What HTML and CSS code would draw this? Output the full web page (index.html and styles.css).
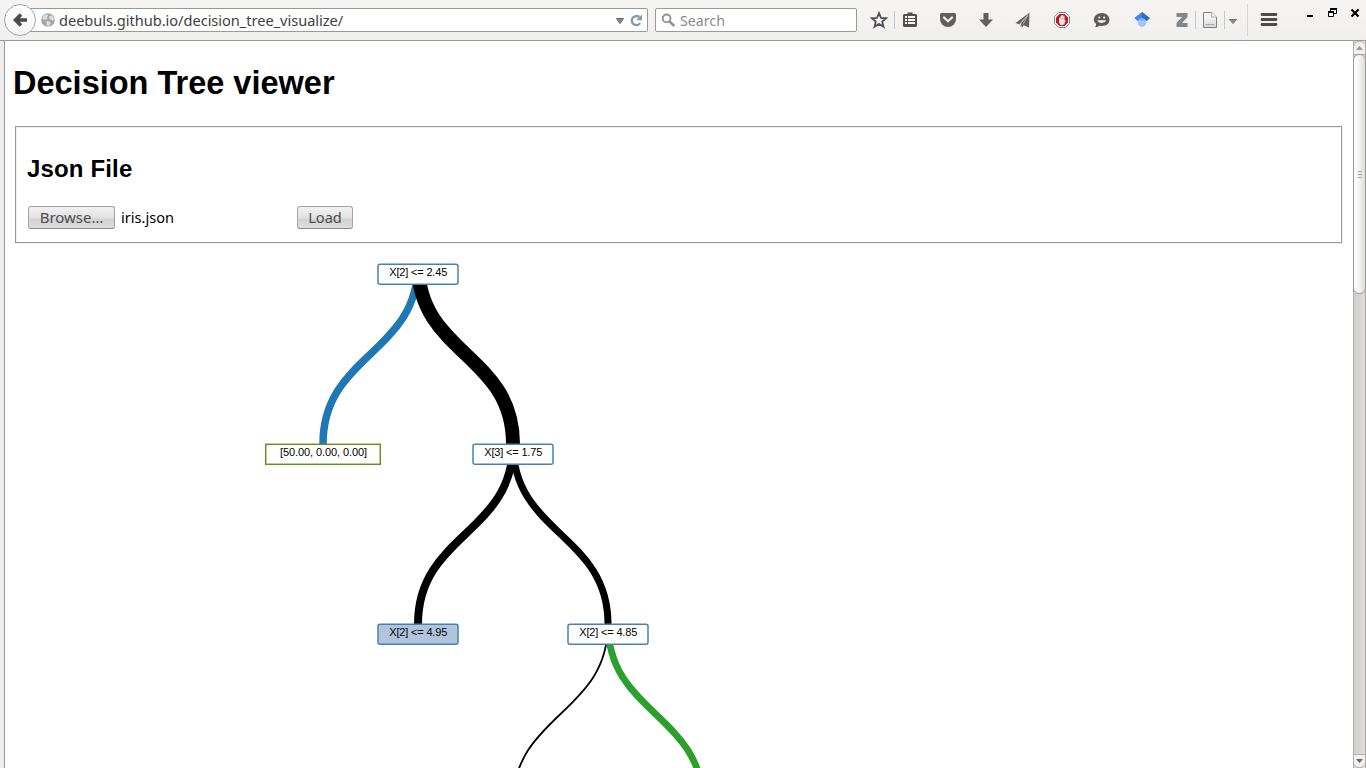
FILE: index.html
```html
<!DOCTYPE html>
<html lang="en">
<head>
<meta charset="utf-8">
<title>Decision Tree viewer</title>
<link rel="stylesheet" href="styles.css">
</head>
<body>
<header class="toolbar">
  <button class="back" aria-label="Back"><svg width="14" height="16" viewBox="0 0 14 16"><path d="M8 2.5 2.5 8 8 13.5M3 8H14" fill="none" stroke="#4a4a4a" stroke-width="3.6"/></svg></button>
  <div class="url">
    <svg class="globe" width="14" height="14" viewBox="0 0 14 14"><circle cx="7" cy="7" r="6.8" fill="#a5a5a5"/><path d="M2 3 5 1.2 7.2 2.2 6 4 6.5 5.5 4 7 1.5 6zM8.5 3 11 2.6 13 5.5 12 8 9.5 6.5 8 5zM5.5 8 9 8.5 9.5 11 7.5 13.3 5.5 12z" fill="#dedede"/></svg>
    <span class="url-text">deebuls.github.io/decision_tree_visualize/</span>
    <svg class="drop" width="8" height="6" viewBox="0 0 8 6"><path d="M.5.5H7.5L4 5.5z" fill="#888" stroke="#666"/></svg>
    <svg class="reload" width="13" height="13" viewBox="0 0 13 13"><path d="M10.200 9.200A4.600 4.600 0 1 1 9.300 3" fill="none" stroke="#8a99a8" stroke-width="2.300"/><path d="M12 .6V6.200H6.200z" fill="#8a99a8"/></svg>
  </div>
  <div class="search">
    <svg width="15" height="15" viewBox="0 0 15 15"><circle cx="5.600" cy="5.400" r="3.900" fill="none" stroke="#909090" stroke-width="1.900"/><path d="M8.500 8.300 13.300 13" stroke="#909090" stroke-width="2.500"/></svg>
    <span class="search-text">Search</span>
  </div>
  <div class="icons">
    <svg class="i star" width="20" height="20"><path d="M10 3.200 12 8 17.100 8.300 13.200 11.600 14.500 16.700 10 13.900 5.500 16.700 6.800 11.600 2.900 8.300 8 8z" fill="#fafafa" stroke="#505050" stroke-width="1.800"/></svg>
    <i class="sep blue"></i>
    <svg class="i list" width="20" height="20"><path d="M4.500 4H7.500V2.500H12.500V4H15.500Q17 4 17 5.500V15.500Q17 17 15.500 17H4.500Q3 17 3 15.500V5.500Q3 4 4.500 4z" fill="#505050"/><path d="M5 6H7V8H5zM8 6H15V8H8zM5 9H7V11H5zM8 9H15V11H8zM5 12H7V14H5zM8 12H15V14H8z" fill="#f5f5f5"/></svg>
    <svg class="i pocket" width="20" height="20"><path d="M3.500 3H16.500Q18 3 18 4.500V9A8 8 0 0 1 2 9V4.500Q2 3 3.500 3z" fill="#606060"/><path d="M6 7.500 10 11.300 14 7.500" fill="none" stroke="#f4f4f4" stroke-width="2.200" stroke-linecap="round" stroke-linejoin="round"/></svg>
    <svg class="i down" width="20" height="20"><path d="M7.500 3H12.500V9.500H17L10 17 3 9.500H7.500z" fill="#606060"/></svg>
    <svg class="i plane" width="20" height="20"><path d="M17.500 2.500 3.500 13 7.300 14.300z M17.500 2.500 8.800 14 10 17.500 11.800 15.200 17 17.500z" fill="#606060"/><path d="M17 3.500 8 14.300 9.500 17.500M15.500 6 11 14.500" fill="none" stroke="#b5b5b5" stroke-width=".8"/></svg>
    <svg class="i block" width="20" height="20"><path d="M6.700 2.500H13.300L17.500 6.700V13.300L13.300 17.500H6.700L2.500 13.300V6.700z" fill="#fff" stroke="#808080"/><path d="M7.500 4H12.500L16 7.500V12.500L12.500 16H7.500L4 12.500V7.500z" fill="#c4161c"/><path d="M7 7.500V12Q7.500 15 10 15.200 12.500 15 13.800 10.500L12.600 10.200V6.500Q12 5.700 11.600 6.500L11.500 5.500Q10.800 4.700 10.300 5.300 9.500 4.700 9 6L8.500 6 8.200 8z" fill="#f3e4e4"/><path d="M8.700 7V10M10.200 6V10M11.600 7V10" stroke="#d89090" stroke-width=".4"/></svg>
    <svg class="i chat" width="20" height="20"><path d="M9.800 3C14.500 3 17.500 6 17.500 9.800 17.500 13.600 14.500 16 9.800 16L7.500 15.700Q5.500 17.200 3 16.800 4.300 15.500 4.100 14 1.800 12.300 1.800 9.800C1.800 6 5.300 3 9.800 3z" fill="#5c5c5c"/><circle cx="7.300" cy="7.500" r="1.100" fill="#f4f4f4"/><circle cx="12.200" cy="7.500" r="1.100" fill="#f4f4f4"/><path d="M5.300 10.300H14.200Q13 13 9.800 13 6.500 13 5.300 10.300z" fill="#f4f4f4"/></svg>
    <svg class="i scholar" width="20" height="20"><path d="M10 2 17.700 8 14.800 11 10 9 5.500 11 2.300 8z" fill="#4285f4"/><path d="M10 2 17.700 8 14.800 11 10 8z" fill="#3068c8"/><circle cx="10" cy="12.500" r="4.300" fill="#a3c3fb"/><path d="M6.200 10.300Q10 6.500 13.800 10.300z" fill="#73a2f4"/></svg>
    <svg class="i zotero" width="20" height="20"><path d="M4.500 3H15.500V7L10 13H15.500V17H4.500V13L10 7H4.500z" fill="#80868a"/></svg>
    <i class="sep blue near"></i>
    <svg class="i page-icon" width="20" height="20"><defs><linearGradient id="pg" x2="0" y2="1"><stop stop-color="#fff"/><stop offset="1" stop-color="#d8d8d8"/></linearGradient></defs><path d="M3.500 2.500H11.500L16.500 7V17.500H3.500z" fill="url(#pg)" stroke="#808080"/><path d="M11.500 2.500V7H16.500" fill="#fff" stroke="#aaa"/><path d="M5.500 14.500H14.500" stroke="#aaa"/></svg>
    <i class="sep blue mid"></i>
    <svg class="i caret" width="10" height="20"><path d="M1.500 9.500H8.500L5 13.500z" fill="#909090" stroke="#707070"/></svg>
    <i class="sep tall"></i>
    <svg class="i menu" width="20" height="20"><path d="M3 4.500H17M3 9.500H17M3 14.500H17" stroke="#4b4b4b" stroke-width="2.800" stroke-linecap="round"/></svg>
    <svg class="w min" width="12" height="12"><path d="M4 9H10" stroke="#000" stroke-width="2"/></svg>
    <svg class="w restore" width="12" height="12"><path d="M4.500 5V1.500H10.500V6.500H8" fill="none" stroke="#000"/><path d="M4 2H11" stroke="#000" stroke-width="2"/><path d="M2.500 4.500H7.500V9.500H2.500z" fill="#fff" stroke="#000"/><path d="M2 5H8" stroke="#000" stroke-width="2"/></svg>
    <svg class="w close" width="12" height="12"><path d="M2.500 2.500 9.500 9.500M9.500 2.500 2.500 9.500" stroke="#000" stroke-width="2.200"/></svg>
  </div>
</header>
<div class="view">
  <main class="page">
    <h1>Decision Tree viewer</h1>
    <fieldset class="loader">
      <h2>Json File</h2>
      <div class="row">
        <button class="btn browse">Browse…</button>
        <span class="filename">iris.json</span>
        <button class="btn load">Load</button>
      </div>
    </fieldset>
    <svg class="tree" width="1330" height="525" viewBox="13 243 1330 525">
      <g class="links">
        <path class="blue-link" d="M418 264C418 354 323 354 323 444" stroke-width="7.500"/>
        <path d="M418 264C418 354 513 354 513 444" stroke-width="14"/>
        <path d="M513 444C513 534 418 534 418 624" stroke-width="8"/>
        <path d="M513 444C513 534 608 534 608 624" stroke-width="7"/>
        <path d="M608 624C608 714 513 714 513 804" stroke-width="1.800"/>
        <path class="green-link" d="M608 624C608 714 703 714 703 804" stroke-width="6.800"/>
      </g>
      <g class="nodes">
        <rect x="378" y="264.300" width="80" height="20" rx="2"/><text x="418.300" y="276" textLength="58">X[2] &lt;= 2.45</text>
        <rect class="leaf" x="265.700" y="444.300" width="114.600" height="20"/><text x="323.500" y="456" textLength="87">[50.00, 0.00, 0.00]</text>
        <rect x="473" y="444.300" width="80" height="20" rx="2"/><text x="513.300" y="456" textLength="58">X[3] &lt;= 1.75</text>
        <rect class="collapsed" x="378" y="624.300" width="80" height="20" rx="2"/><text x="418.300" y="636" textLength="58">X[2] &lt;= 4.95</text>
        <rect x="568" y="624.300" width="80" height="20" rx="2"/><text x="608.300" y="636" textLength="58">X[2] &lt;= 4.85</text>
      </g>
    </svg>
  </main>
  <div class="scrollbar">
    <div class="cap top"><svg width="7" height="4"><path d="M0 4 3.500 0 7 4z" fill="#999"/></svg></div>
    <div class="thumb"><i></i><i></i><i></i></div>
    <div class="cap bottom"><svg width="7" height="4"><path d="M0 0H7L3.500 4z" fill="#666"/></svg></div>
  </div>
</div>
</body>
</html>
```
FILE: styles.css
```css
* { box-sizing: border-box; }
body { margin: 0; height: 768px; overflow: hidden; display: flex; flex-direction: column; font-family: "Liberation Sans", Arial, sans-serif; color: #000; background: #fff; }
svg { display: block; flex: none; }

.toolbar { flex: none; height: 41px; display: flex; align-items: flex-start; padding-left: 4px; background: linear-gradient(#f6f5f4, #f0efee); border-bottom: 1px solid #999; }
.back { flex: none; width: 32px; height: 32px; margin-top: 4px; padding: 0; display: flex; align-items: center; justify-content: center; border: 1px solid #9ea5af; border-radius: 50%; background: linear-gradient(#fff, #f4f4f4); z-index: 1; }
.url { flex: none; width: 623px; height: 24px; margin: 8px 0 0 -11px; padding: 0 4px 0 15px; display: flex; align-items: center; border: 1px solid #999; border-radius: 2px; background: #fff; }
.url-text { margin-left: 4px; font: 14.600px/22px "Noto Sans", sans-serif; letter-spacing: -.03px; color: #404040; white-space: nowrap; }
.drop { margin-left: auto; margin-top: 2px; }
.reload { margin-left: 6px; }
.search { flex: none; width: 202px; height: 24px; margin: 8px 0 0 7px; padding-left: 5px; display: flex; align-items: center; border: 1px solid #999; border-radius: 2px; background: #fff; }
.search-text { margin-left: 4px; padding-top: 1px; font: 14.200px/22px "Noto Sans", sans-serif; color: #8c8c8c; }

.icons { display: flex; align-items: flex-start; }
.i { margin-top: 10px; }
.star { margin-left: 12px; }
.list { margin-left: 5px; }
.pocket, .down { margin-left: 18px; }
.plane { margin-left: 16px; }
.block, .chat, .scholar, .zotero { margin-left: 20px; }
.page-icon { margin-left: 4px; }
.caret { margin-left: 3px; }
.menu { margin-left: 11px; }
.sep { flex: none; width: 1px; margin-top: 11px; margin-left: 5px; height: 18px; background: #bccbd6; }
.sep.near { margin-left: 3px; }
.sep.mid { margin-left: 4px; }
.sep.tall { height: 32px; margin: 4px 0 0 9px; background: #d5d5d5; }
.w { margin-top: 7px; margin-left: 11px; }
.min { margin-left: 24px; }

.view { flex: 1; min-height: 0; display: flex; background: #ededed; padding-left: 4px; }
.page { flex: none; width: 1349px; padding: 0 8px; border-left: 1px solid #999; background: #fff; overflow: hidden; }
h1 { margin: 23px 0 0; font-size: 32.500px; line-height: 38px; white-space: nowrap; }
.loader { width: 1327px; height: 117px; margin: 24px 0 0 2px; padding: 1px 11px; border: 1px solid #999; box-shadow: 1px 1px #eee, inset 1px 1px #eee; }
h2 { margin: 27px 0 0; font-size: 24px; line-height: 28px; letter-spacing: .15px; }
.row { display: flex; align-items: center; margin-top: 22px; padding-left: 1px; height: 24px; }
.btn { flex: none; height: 23px; padding: 0; border: 1px solid #a3a3a3; border-bottom-color: #888; border-radius: 3px; background: linear-gradient(#f2f2f2, #e2e2e2 50%, #d2d2d2 60%, #dedede); font: 14.600px/20px "Noto Sans", sans-serif; color: #4c4c4c; }
.browse { width: 87px; font-size: 15px; }
.load { width: 56px; }
.filename { width: 182px; padding-left: 6px; font: 14.600px/20px "Noto Sans", sans-serif; }

.tree { margin-top: 0; }
.links path { fill: none; stroke: #000; }
.links .blue-link { stroke: #1f77b4; }
.links .green-link { stroke: #2ca02c; }
.nodes rect { fill: #fff; stroke: steelblue; stroke-width: 1.500px; }
.nodes .leaf { stroke: olivedrab; }
.nodes .collapsed { fill: lightsteelblue; }
.nodes text { font-size: 11px; text-anchor: middle; }

.scrollbar { flex: none; width: 13px; display: flex; flex-direction: column; background: linear-gradient(90deg, #d2d0ce, #dedddb); border-left: 1px solid #b0afad; border-right: 1px solid #b0afad; }
.cap { height: 14px; display: flex; align-items: center; justify-content: center; background: #f1f0ef; border: 1px solid #b5b3b1; border-width: 1px 0; }
.top { border-radius: 6px 6px 0 0; }
.bottom { margin-top: auto; border-radius: 0 0 6px 6px; }
.thumb { height: 240px; margin: -1px -1px 0; display: flex; flex-direction: column; align-items: center; justify-content: center; gap: 2px; border: 1px solid #999; border-radius: 6px; background: linear-gradient(90deg, #fff, #f4f3f2 50%, #dddcda); }
.thumb i { width: 4px; height: 1px; background: #999; }
```
